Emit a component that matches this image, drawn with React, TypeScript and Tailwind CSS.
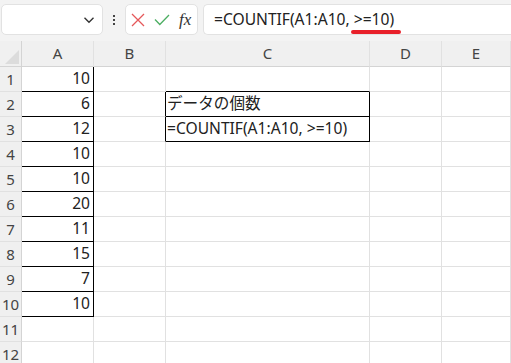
import React from 'react';

const values = [10, 6, 12, 10, 10, 20, 11, 15, 7, 10, null, null];
const cols = ['A', 'B', 'C', 'D', 'E'];
const font = { fontFamily: '"Noto Sans", "Noto Sans CJK JP", sans-serif' };

function cellBorder(row: number, col: number) {
  // row: 1-based, col: 0..4
  let right = 'border-r-[#e1e1e1]';
  let bottom = 'border-b-[#e1e1e1]';
  if (col === 0 && row <= 10) {
    right = 'border-r-black';
    bottom = 'border-b-black';
  }
  if (col === 1 && (row === 2 || row === 3)) right = 'border-r-black';
  if (col === 2 && row === 1) bottom = 'border-b-black';
  if (col === 2 && (row === 2 || row === 3)) {
    right = 'border-r-black';
    bottom = 'border-b-black';
  }
  return `border-r border-b ${right} ${bottom}`;
}

export default function App() {
  return (
    <div className="w-[511px] h-[363px] overflow-hidden bg-white text-[#222]" style={font}>
      {/* toolbar */}
      <div className="h-[41px] bg-[#f3f3f3] flex items-start pt-[4px] pl-[1px]">
        <div className="w-[102px] h-[31px] bg-white border border-[#e2e2e2] rounded-[5px] flex items-center justify-end pr-[7px]">
          <svg width="12" height="8" viewBox="0 0 12 8" fill="none">
            <path d="M1.5 1.8L6 6.2L10.5 1.8" stroke="#333" strokeWidth="1.4" />
          </svg>
        </div>
        <div className="w-[22px] h-[31px] flex flex-col items-center justify-center gap-[2px]">
          <span className="w-[2px] h-[2px] bg-[#444]" />
          <span className="w-[2px] h-[2px] bg-[#444]" />
          <span className="w-[2px] h-[2px] bg-[#444]" />
        </div>
        <div className="w-[73px] h-[31px] bg-white border border-[#e2e2e2] rounded-[5px] flex items-center pl-[5px] gap-[9px]">
          <svg width="14" height="14" viewBox="0 0 14 14">
            <path d="M1 1L13 13M13 1L1 13" stroke="#e5585a" strokeWidth="1.3" />
          </svg>
          <svg width="16" height="12" viewBox="0 0 16 12">
            <path d="M1 5.5L5.8 10.5L15 1" stroke="#4cae62" strokeWidth="1.3" fill="none" />
          </svg>
          <span className="italic text-[17px] leading-none text-[#333]" style={{ fontFamily: '"Liberation Serif", serif' }}>
            fx
          </span>
        </div>
        <div className="relative ml-[5px] flex-1 h-[31px] bg-white border border-[#e2e2e2] border-r-0 rounded-l-[5px] flex items-center pl-[10px] text-[15.6px]">
          =COUNTIF(A1:A10, &gt;=10)
          <span className="absolute left-[147px] top-[25px] w-[50px] h-[4px] rounded-full bg-[#e8202a]" />
        </div>
      </div>

      {/* grid */}
      <div
        className="grid"
        style={{ gridTemplateColumns: '22px 72px 72px 204px 72px 69px', gridTemplateRows: '26px repeat(12, 25px)' }}
      >
        <div className="relative bg-[#f0f0f0] border-r border-b border-[#d4d4d4]">
          <svg className="absolute right-[2px] bottom-[2px]" width="14" height="14" viewBox="0 0 14 14">
            <path d="M14 0V14H0Z" fill="#dcdcdc" />
          </svg>
        </div>
        {cols.map((c) => (
          <div
            key={c}
            className="bg-[#f0f0f0] border-r border-b border-r-[#e1e1e1] border-b-[#d4d4d4] flex items-center justify-center text-[15px] text-[#444]"
          >
            {c}
          </div>
        ))}
        {values.map((v, i) => {
          const row = i + 1;
          return (
            <React.Fragment key={row}>
              <div className="bg-[#f0f0f0] border-r border-b border-r-[#d4d4d4] border-b-[#e1e1e1] flex items-center justify-center text-[15px] text-[#444]">
                {row}
              </div>
              {cols.map((c, ci) => (
                <div
                  key={c}
                  className={`${cellBorder(row, ci)} flex items-center text-[15.6px] whitespace-nowrap ${
                    ci === 0 ? 'justify-end pr-[3px]' : 'pl-[1px]'
                  }`}
                >
                  {ci === 0 && v !== null ? v : null}
                  {ci === 2 && row === 2 ? 'データの個数' : null}
                  {ci === 2 && row === 3 ? '=COUNTIF(A1:A10, >=10)' : null}
                </div>
              ))}
            </React.Fragment>
          );
        })}
      </div>
    </div>
  );
}
